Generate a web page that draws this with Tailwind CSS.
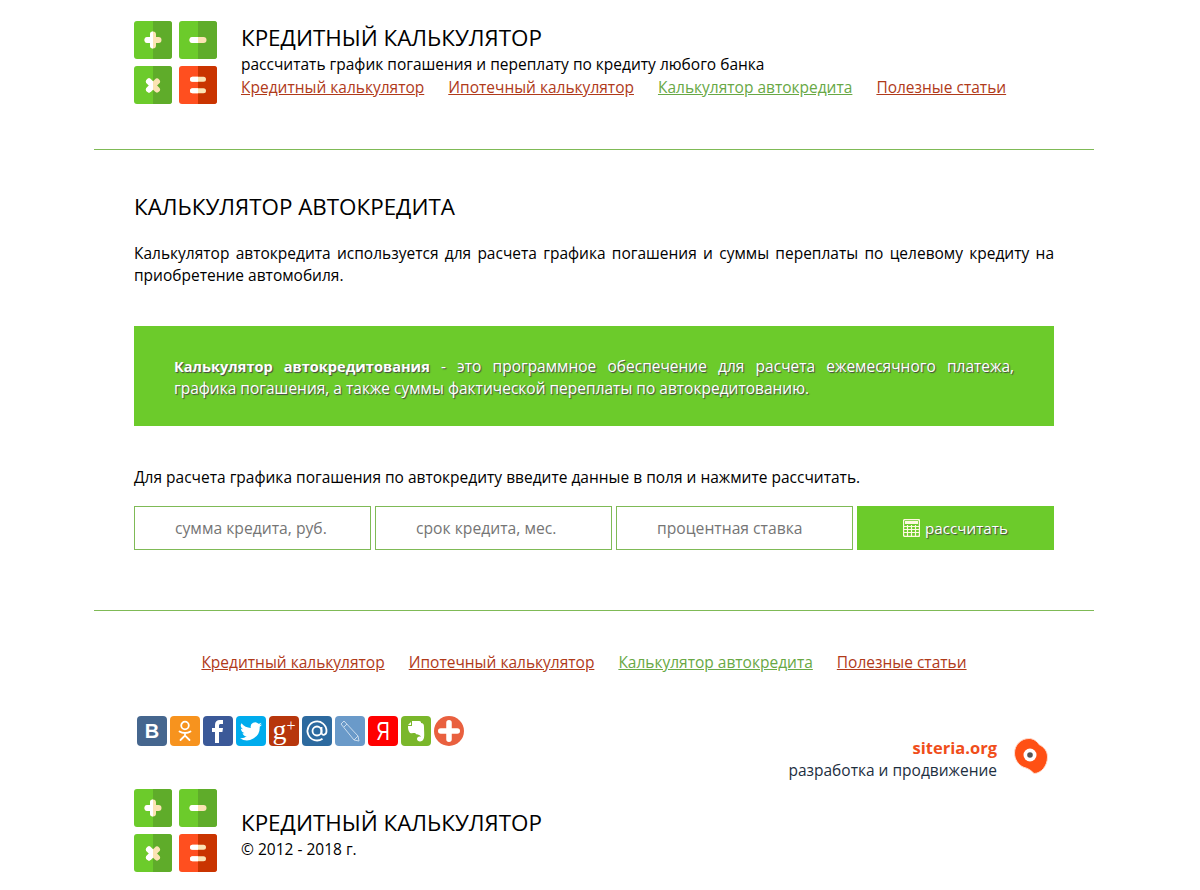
<!doctype html>
<html>

<head>
  <meta charset="UTF-8">
  <meta name="viewport" content="width=device-width, initial-scale=1.0">
  <script src="https://cdn.jsdelivr.net/npm/@tailwindcss/browser@4"></script>
</head>

<body class="bg-white text-black font-['Open_Sans',sans-serif] text-[15.5px] leading-[22px]">
  <div class="w-[1000px] ml-[94px]">

    <!-- header -->
    <div class="flex px-10 pt-[21px] h-[150px] border-b border-[#7fba56]">
      <svg class="w-[83px] h-[83px] shrink-0" viewBox="0 0 83 83">
        <defs>
          <clipPath id="leftHalf"><path d="M0 0h19v38H0zM45 0h19v38H45zM0 45h19v38H0zM45 45h19v38H45z"/></clipPath>
          <symbol id="logo" viewBox="0 0 83 83">
            <rect width="38" height="38" rx="3" fill="#6ccb2b"/><path d="M19 0h16a3 3 0 0 1 3 3v32a3 3 0 0 1-3 3H19z" fill="#5fac2a"/>
            <rect x="45" width="38" height="38" rx="3" fill="#6ccb2b"/><path d="M64 0h16a3 3 0 0 1 3 3v32a3 3 0 0 1-3 3H64z" fill="#5fac2a"/>
            <rect y="45" width="38" height="38" rx="3" fill="#6ccb2b"/><path d="M19 45h16a3 3 0 0 1 3 3v32a3 3 0 0 1-3 3H19z" fill="#5fac2a"/>
            <rect x="45" y="45" width="38" height="38" rx="3" fill="#ff4f1f"/><path d="M64 45h16a3 3 0 0 1 3 3v32a3 3 0 0 1-3 3H64z" fill="#c93400"/>
            <g stroke-linecap="round" fill="none" stroke="#fbe3b4">
              <path d="M13.500 19h11M19 13.500v11" stroke-width="6"/>
              <path d="M58.500 19h11" stroke-width="6"/>
              <path d="M15 60.500l8 8M23 60.500l-8 8" stroke-width="6"/>
              <path d="M58.500 58.200h11M58.500 69.800h11" stroke-width="5"/>
            </g>
            <g stroke-linecap="round" fill="none" stroke="#fff" clip-path="url(#leftHalf)">
              <path d="M13.500 19h11M19 13.500v11" stroke-width="6"/>
              <path d="M58.500 19h11" stroke-width="6"/>
              <path d="M15 60.500l8 8M23 60.500l-8 8" stroke-width="6"/>
              <path d="M58.500 58.200h11M58.500 69.800h11" stroke-width="5"/>
            </g>
          </symbol>
        </defs>
        <use href="#logo"/>
      </svg>
      <div class="ml-[24px] pt-[2px]">
        <div class="text-[22.4px] leading-[30px]">КРЕДИТНЫЙ КАЛЬКУЛЯТОР</div>
        <div>рассчитать график погашения и переплату по кредиту любого банка</div>
        <div class="flex gap-[24px] mt-[1px]">
          <a href="#" class="underline text-[#b03a1a]">Кредитный калькулятор</a>
          <a href="#" class="underline text-[#b03a1a]">Ипотечный калькулятор</a>
          <a href="#" class="underline text-[#68a845]">Калькулятор автокредита</a>
          <a href="#" class="underline text-[#b03a1a]">Полезные статьи</a>
        </div>
      </div>
    </div>

    <!-- content -->
    <div class="px-10 border-b border-[#7fba56] h-[461px]">
      <h1 class="text-[22.4px] leading-[30px] pt-[42px]">КАЛЬКУЛЯТОР АВТОКРЕДИТА</h1>
      <p class="mt-[20px] text-justify">Калькулятор автокредита используется для расчета графика погашения и суммы переплаты по целевому кредиту на приобретение автомобиля.</p>

      <div class="mt-[40px] h-[100px] bg-[#6ccb2b] px-10 pt-[29px] text-white text-justify [text-shadow:1px_1px_1px_#444]">
        <b class="text-[14.600px]">Калькулятор автокредитования</b> - это программное обеспечение для расчета ежемесячного платежа, графика погашения, а также суммы фактической переплаты по автокредитованию.
      </div>

      <p class="mt-[40px]">Для расчета графика погашения по автокредиту введите данные в поля и нажмите рассчитать.</p>

      <div class="flex gap-1 mt-[18px] h-[44px]">
        <input class="w-[237px] border border-[#7fba56] pl-10 text-[15.700px] placeholder:text-[#757575]" placeholder="сумма кредита, руб.">
        <input class="w-[237px] border border-[#7fba56] pl-10 text-[15.700px] placeholder:text-[#757575]" placeholder="срок кредита, мес.">
        <input class="w-[237px] border border-[#7fba56] pl-10 text-[15.700px] placeholder:text-[#757575]" placeholder="процентная ставка">
        <button class="w-[197px] bg-[#6ccb2b] text-white text-[15.200px] flex items-center justify-center gap-[5px] [text-shadow:1px_1px_1px_#444]">
          <svg class="w-[17px] h-[18px]" viewBox="0 0 17 18" fill="none" stroke="#fff8e0">
            <rect x="0.500" y="0.500" width="16" height="17" rx="1.500" stroke-width="1.400"/>
            <rect x="2" y="2" width="13" height="3" fill="#fff8e0" stroke="none"/>
            <path d="M1 7.500h15M1 10.500h15M1 13.500h15M4.500 6v11M8.500 6v11M12.500 6v11" stroke-width="1.200"/>
          </svg>
          рассчитать
        </button>
      </div>
    </div>

    <!-- footer links -->
    <div class="flex justify-center gap-[24px] pt-[40px] pr-[20px]">
      <a href="#" class="underline text-[#b03a1a]">Кредитный калькулятор</a>
      <a href="#" class="underline text-[#b03a1a]">Ипотечный калькулятор</a>
      <a href="#" class="underline text-[#68a845]">Калькулятор автокредита</a>
      <a href="#" class="underline text-[#b03a1a]">Полезные статьи</a>
    </div>

    <!-- socials + siteria -->
    <div class="flex justify-between pl-[43px] pr-[45px] mt-[43px] h-[73px]">
      <div class="flex gap-[3px] h-[30px] text-white font-['Liberation_Sans',sans-serif]">
        <div class="w-[30px] h-[30px] rounded bg-[#45668e] flex items-center justify-center font-bold text-[20px]">B</div>
        <div class="w-[30px] h-[30px] rounded bg-[#f7931e] flex items-center justify-center">
          <svg class="w-[16px] h-[22px]" viewBox="0 0 16 22" fill="none" stroke="#fff" stroke-width="1.800" stroke-linecap="round"><circle cx="8" cy="5.500" r="3.800"/><path d="M2.500 11.500c3 2 8 2 11 0M8 13.500v2M3.500 20l4.500-4.500 4.500 4.500"/></svg>
        </div>
        <div class="w-[30px] h-[30px] rounded bg-[#3b5998] flex items-center justify-center">
          <svg class="w-[14px] h-[24px]" viewBox="0 0 14 24" fill="#fff"><path d="M4 24V13H1V9h3V6c0-3.400 2-5 4.800-5H12v4h-2.200c-1.300 0-1.800.6-1.800 1.700V9h4l-.6 4H8v11z"/></svg>
        </div>
        <div class="w-[30px] h-[30px] rounded bg-[#00aced] flex items-center justify-center">
          <svg class="w-[24px] h-[24px]" viewBox="0 0 24 24" fill="#fff"><path d="M23 5.500a9 9 0 0 1-2.600.7 4.500 4.500 0 0 0 2-2.500 9 9 0 0 1-2.900 1.100 4.500 4.500 0 0 0-7.700 4.100A12.800 12.800 0 0 1 2.500 4.200a4.500 4.500 0 0 0 1.400 6 4.500 4.500 0 0 1-2-.6c0 2.200 1.500 4.100 3.600 4.500a4.500 4.500 0 0 1-2 .1 4.500 4.500 0 0 0 4.200 3.100A9 9 0 0 1 1 19.200a12.800 12.800 0 0 0 19.700-11.400A9 9 0 0 0 23 5.500z"/></svg>
        </div>
        <div class="w-[30px] h-[30px] rounded bg-[#b7360c] flex items-start justify-center font-['Liberation_Serif',serif] text-[28px] leading-[28px]">g<span class="text-[16px] leading-[20px]">+</span></div>
        <div class="w-[30px] h-[30px] rounded bg-[#2d6a9f] flex items-center justify-center">
          <svg class="w-[24px] h-[24px]" viewBox="0 0 24 24" fill="none" stroke="#fff" stroke-width="1.800"><circle cx="12" cy="12" r="4.500"/><path d="M16.500 8v5.500c0 3.500 5 3 5-1.500a9.500 9.500 0 1 0-4 7.700"/></svg>
        </div>
        <div class="w-[30px] h-[30px] rounded bg-[#6a9ac9] flex items-center justify-center">
          <svg class="w-[22px] h-[24px]" viewBox="0 0 22 24" fill="none" stroke="#c9dcee" stroke-width="1"><path d="M2 5l3-3 14 15 1 5-5-1zM5 8l3-3M15 21l4-4"/></svg>
        </div>
        <div class="w-[30px] h-[30px] rounded bg-[#ff0000] flex items-center justify-center text-[25px]"><span class="inline-block scale-x-75">Я</span></div>
        <div class="w-[30px] h-[30px] rounded bg-[#7ab72b] flex items-center justify-center">
          <svg class="w-[20px] h-[24px]" viewBox="0 0 20 24" fill="#fff"><path d="M5 3l-3 3h3zM6 2h7c2 0 2 1 2 2 2 0 3 1 3 4 0 5 1 11-1 13-1 2-6 2-6-1 0-2 2-3 4-2-1-3-4-2-5-3-1-2-3 0-6-1C2 12 2 9 2 7h4z"/></svg>
        </div>
        <div class="w-[30px] h-[30px] rounded-full bg-[#e9603f] flex items-center justify-center">
          <svg class="w-[22px] h-[22px]" viewBox="0 0 20 20"><path d="M10 2.500v15M2.500 10h15" stroke="#fff" stroke-width="5" stroke-linecap="round"/></svg>
        </div>
      </div>
      <div class="flex items-start pt-[21px]">
        <div class="text-right">
          <div class="font-bold text-[16.500px] text-[#f04e1a]">siteria.org</div>
          <div class="text-[#1d2f3f]">разработка и продвижение</div>
        </div>
        <svg class="w-[36px] h-[38px] ml-[16px]" viewBox="0 0 36 38">
          <path d="M16 1.500C20 1.500 24 4 26 7.500 31 10 34.500 14 34.500 20 34.500 29 28 36.500 21 36.500 18 33 15 31.500 10 30 5 27.500 1.500 22 1.500 16 1.500 8 8 1.500 16 1.500z" fill="#ff5014" stroke="#ffdccd" stroke-width="1"/>
          <circle cx="17" cy="18" r="6.500" fill="#fff"/>
          <circle cx="17" cy="18" r="2.800" fill="#555"/>
        </svg>
      </div>
    </div>

    <!-- bottom logo -->
    <div class="flex px-10">
      <svg class="w-[83px] h-[83px] shrink-0" viewBox="0 0 83 83"><use href="#logo"/></svg>
      <div class="ml-[24px] pt-[19px]">
        <div class="text-[22.4px] leading-[30px]">КРЕДИТНЫЙ КАЛЬКУЛЯТОР</div>
        <div>© 2012 - 2018 г.</div>
      </div>
    </div>
  </div>
</body>

</html>
